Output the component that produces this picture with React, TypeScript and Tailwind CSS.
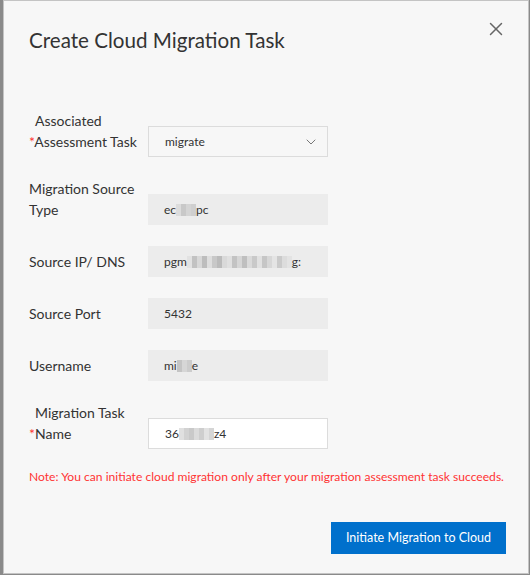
import React from 'react';
import { X, ChevronDown } from 'lucide-react';

const font = { fontFamily: 'Lato, "Open Sans", sans-serif' };

interface RowProps {
  label: string[];
  required?: boolean;
  children: React.ReactNode;
}

const Row: React.FC<RowProps> = ({ label, required, children }) => (
  <div className="flex items-end">
    <div className={`w-[119px] pb-[5px] text-[14px] leading-[21px] text-[#333] ${required ? 'pl-[6px]' : ''}`}>
      {label.map((line, i) => (
        <div key={i} className="whitespace-nowrap">
          {required && i === label.length - 1 && <span className="-ml-[6px] text-[#f33]">*</span>}
          {line}
        </div>
      ))}
    </div>
    {children}
  </div>
);

// pixelated redaction, drawn as small grey cells
const Pixels: React.FC<{ cells: string[] }> = ({ cells }) => (
  <span className="inline-flex h-[12px] items-stretch">
    {cells.map((c, i) => (
      <span key={i} className="w-[5px]" style={{ backgroundColor: c }} />
    ))}
  </span>
);

const ReadOnly: React.FC<{ children: React.ReactNode }> = ({ children }) => (
  <div className="flex h-[31px] w-[180px] items-center overflow-hidden whitespace-nowrap bg-[#ececec] pl-[16px] text-[12px] text-[#333]">
    {children}
  </div>
);

export default function App() {
  return (
    <div className="h-[575px] w-[530px] bg-[#8a8a8a] pl-[3px]" style={font}>
      <div className="relative h-[574px] w-[526px] border border-[#c4c4c4] bg-[#f7f7f7]">
        <button className="absolute right-[21px] top-[17px] text-[#666]">
          <X className="h-[22px] w-[22px]" strokeWidth={1.6} />
        </button>
        <div className="pl-[25px] pt-[26px]">
          <h1 className="text-[20.6px] leading-[26px] text-[#333]">Create Cloud Migration Task</h1>
          <div className="mt-[57px] flex flex-col gap-[21px]">
            <Row label={['Associated', 'Assessment Task']} required>
              <div className="flex h-[31px] w-[180px] items-center justify-between border border-[#dcdcdc] bg-[#f7f7f7] pl-[16px] pr-[8px] text-[12px] text-[#333]">
                <span>migrate</span>
                <ChevronDown className="h-[16px] w-[16px] text-[#777]" strokeWidth={1.5} />
              </div>
            </Row>
            <Row label={['Migration Source', 'Type']}>
              <ReadOnly>
                ec<Pixels cells={['#dcdcdc', '#c8c8c8', '#d4d4d4', '#cfcfcf']} />pc
              </ReadOnly>
            </Row>
            <Row label={['Source IP/ DNS']}>
              <ReadOnly>
                pgm
                <Pixels
                  cells={['#e2e2e2', '#c2c2c2', '#d8d8d8', '#bdbdbd', '#dedede', '#c8c8c8', '#bbbbbb', '#d9d9d9', '#e0e0e0', '#c3c3c3', '#d6d6d6', '#bfbfbf', '#dadada', '#c9c9c9', '#e1e1e1', '#c6c6c6', '#d7d7d7', '#e4e4e4', '#cacaca', '#dcdcdc', '#e3e3e3']}
                />
                g:
              </ReadOnly>
            </Row>
            <Row label={['Source Port']}>
              <ReadOnly>5432</ReadOnly>
            </Row>
            <Row label={['Username']}>
              <ReadOnly>
                mi<Pixels cells={['#c4c4c4', '#d6d6d6', '#cccccc']} />e
              </ReadOnly>
            </Row>
            <Row label={['Migration Task', 'Name']} required>
              <div className="flex h-[31px] w-[180px] items-center whitespace-nowrap border border-[#dcdcdc] bg-white pl-[16px] text-[12px] text-[#333]">
                36<Pixels cells={['#e0e0e0', '#d2d2d2', '#c9c9c9', '#dbdbdb', '#cecece', '#e2e2e2', '#d5d5d5']} />z4
              </div>
            </Row>
          </div>
          <p className="mt-[19px] whitespace-nowrap text-[12.1px] leading-[18px] text-[#f33]">
            Note: You can initiate cloud migration only after your migration assessment task succeeds.
          </p>
          <div className="mt-[36px] flex justify-end pr-[22px]">
            <button className="h-[32px] w-[175px] bg-[#0070cc] text-[12.5px] text-white">
              Initiate Migration to Cloud
            </button>
          </div>
        </div>
      </div>
    </div>
  );
}
